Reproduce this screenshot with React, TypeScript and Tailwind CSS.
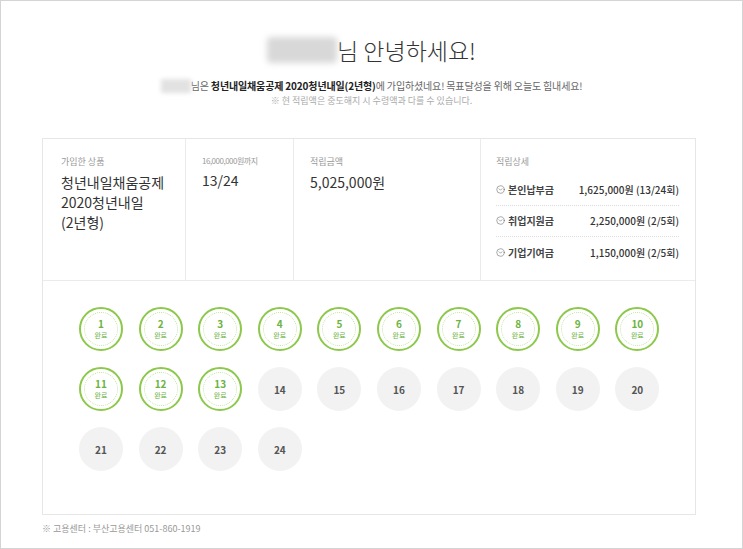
import { CircleChevronDown } from "lucide-react"

const font = { fontFamily: '"Noto Sans CJK KR", "Noto Sans", sans-serif' }

const details = [
  { label: "본인납부금", value: "1,625,000원 (13/24회)" },
  { label: "취업지원금", value: "2,250,000원 (2/5회)" },
  { label: "기업기여금", value: "1,150,000원 (2/5회)" },
]

function Done({ n }: { n: number }) {
  return (
    <div className="relative w-[44px] h-[44px] rounded-full border-2 border-[#8cc84b] bg-white flex items-center justify-center">
      <div className="absolute inset-[3px] rounded-full border border-dotted border-[#c4e3a3]" />
      <div className="relative flex flex-col items-center leading-none">
        <span className="text-[10px] font-bold text-[#6db33f]">{n}</span>
        <span className="mt-[3px] text-[7px] text-[#6db33f]">완료</span>
      </div>
    </div>
  )
}

function Todo({ n }: { n: number }) {
  return (
    <div className="w-[44px] h-[44px] rounded-full bg-[#f2f2f2] flex items-center justify-center">
      <span className="text-[10px] font-bold text-[#555]">{n}</span>
    </div>
  )
}

export default function App() {
  const rounds = Array.from({ length: 24 }, (_, i) => i + 1)

  return (
    <div style={font} className="w-[743px] h-[549px] bg-white border border-[#d4d4d4] overflow-hidden text-[#333]">
      {/* Greeting */}
      <div className="pt-[35px] flex items-center justify-center">
        <div className="w-[70px] h-[26px] bg-[#d8d8d8] blur-[3px] rounded-sm" />
        <h1 className="text-[23px] leading-[28px] font-light text-[#333]">님 안녕하세요!</h1>
      </div>
      <div className="mt-[15px] flex items-center justify-center text-[10px] leading-[14px] tracking-[-0.15px] text-[#666]">
        <div className="w-[30px] h-[14px] bg-[#e2e2e2] blur-[2px]" />
        <span>
          님은 <b className="text-[#222]">청년내일채움공제 2020청년내일(2년형)</b>에 가입하셨네요! 목표달성을 위해 오늘도 힘내세요!
        </span>
      </div>
      <p className="mt-[1px] text-center text-[9px] leading-[13px] text-[#aaa]">※ 현 적립액은 중도해지 시 수령액과 다를 수 있습니다.</p>

      {/* Card */}
      <div className="ml-[41px] mt-[31px] w-[654px] border border-[#e6e6e6]">
        <div className="flex h-[142px] border-b border-[#ebebeb]">
          <div className="w-[143px] pl-[18px] pt-[16px] border-r border-[#ebebeb]">
            <p className="text-[9px] text-[#999]">가입한 상품</p>
            <p className="mt-[3px] text-[14px] leading-[20px] text-[#333]">
              청년내일채움공제
              <br />
              2020청년내일
              <br />
              (2년형)
            </p>
          </div>
          <div className="w-[108px] pl-[16px] pt-[16px] border-r border-[#ebebeb]">
            <p className="text-[8px] tracking-[-0.5px] text-[#999]">16,000,000원까지</p>
            <p className="mt-[3px] text-[14px] leading-[20px]">13/24</p>
          </div>
          <div className="w-[187px] pl-[16px] pt-[16px] border-r border-[#ebebeb]">
            <p className="text-[9px] text-[#999]">적립금액</p>
            <p className="mt-[3px] text-[14px] leading-[20px]">5,025,000원</p>
          </div>
          <div className="flex-1 pl-[15px] pr-[16px] pt-[16px]">
            <p className="text-[9px] text-[#999]">적립상세</p>
            <div className="mt-[6px]">
              {details.map((d, i) => (
                <div
                  key={d.label}
                  className={`flex items-center justify-between h-[31px] text-[10px] ${i < 2 ? "border-b border-dotted border-[#dcdcdc]" : ""}`}
                >
                  <span className="flex items-center gap-[3px] font-bold text-[#444]">
                    <CircleChevronDown size={9} strokeWidth={1.5} className="text-[#666]" />
                    {d.label}
                  </span>
                  <span className="font-medium text-[#333]">{d.value}</span>
                </div>
              ))}
            </div>
          </div>
        </div>
        <div className="h-[233px] pl-[36px] pt-[26px]">
          <div className="grid grid-cols-[repeat(10,44px)] gap-x-[15.6px] gap-y-[16px]">
            {rounds.map((n) => (n <= 13 ? <Done key={n} n={n} /> : <Todo key={n} n={n} />))}
          </div>
        </div>
      </div>

      <p className="ml-[41px] mt-[7px] text-[9px] text-[#999]">※ 고용센터 : 부산고용센터 051-860-1919</p>
    </div>
  )
}
